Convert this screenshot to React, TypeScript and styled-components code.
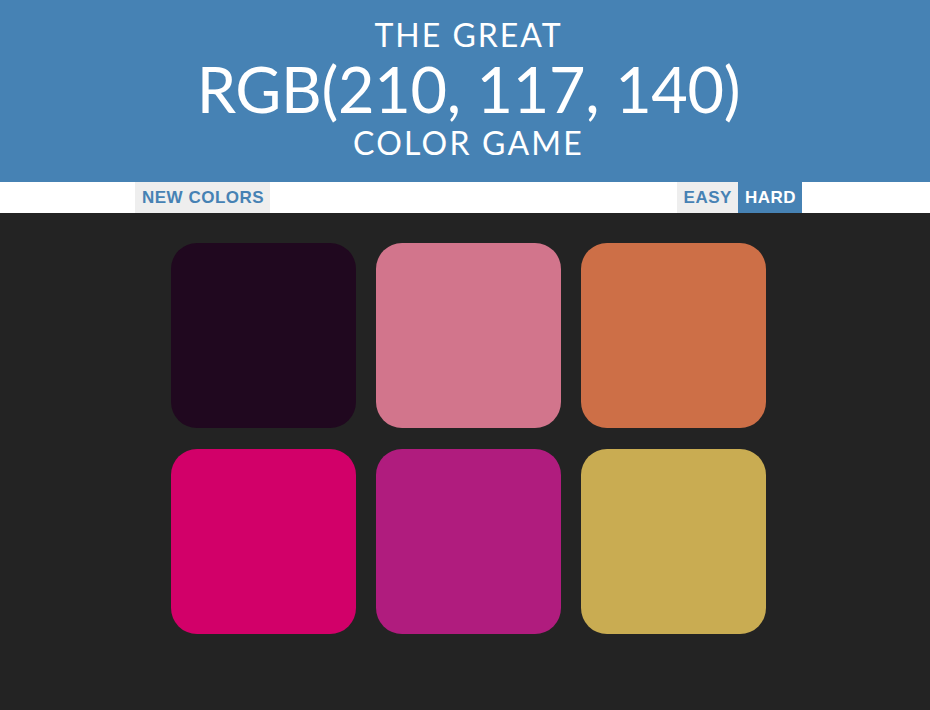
import React from "react";
import styled, { createGlobalStyle } from "styled-components";

const GlobalStyle = createGlobalStyle`
  html, body {
    margin: 0;
    padding: 0;
    background: #232323;
  }
  body {
    font-family: "Lato", "Liberation Sans", sans-serif;
  }
`;

const Header = styled.header`
  background: #4682b4;
  color: #ffffff;
  padding: 17px 0 0 7px;
  height: 182px;
  box-sizing: border-box;
  display: flex;
  flex-direction: column;
  align-items: center;
  text-transform: uppercase;
  font-family: "Lato", sans-serif;
  font-weight: 400;
`;

const Line = styled.div<{ $size: number; $lh: number; $spacing?: number }>`
  font-size: ${(p) => p.$size}px;
  line-height: ${(p) => p.$lh}px;
  letter-spacing: ${(p) => p.$spacing ?? 0}px;
  white-space: nowrap;
`;

const Stripe = styled.div`
  background: #ffffff;
  height: 31px;
  padding-left: 7px;
  display: flex;
  justify-content: center;
`;

const StripeInner = styled.div`
  width: 667px;
  display: flex;
  justify-content: space-between;
  align-items: stretch;
`;

const Group = styled.div`
  display: flex;
`;

const Button = styled.button<{ $active?: boolean }>`
  border: none;
  margin: 0;
  padding: 0 6px 0 7px;
  height: 31px;
  background: ${(p) => (p.$active ? "#4682b4" : "#eeeeee")};
  color: ${(p) => (p.$active ? "#ffffff" : "#4682b4")};
  font-family: "Liberation Sans", Arial, sans-serif;
  font-weight: 700;
  font-size: 17px;
  letter-spacing: 0.5px;
  text-transform: uppercase;
  cursor: pointer;
  outline: none;
`;

const Board = styled.main`
  padding: 30px 0 0 7px;
  display: grid;
  grid-template-columns: repeat(3, 185px);
  grid-auto-rows: 185px;
  column-gap: 20px;
  row-gap: 21px;
  justify-content: center;
`;

const Square = styled.div<{ $color: string }>`
  background: ${(p) => p.$color};
  border-radius: 26px;
`;

const colors = [
  "rgb(32, 8, 31)",
  "rgb(210, 117, 140)",
  "rgb(205, 111, 71)",
  "rgb(210, 0, 105)",
  "rgb(176, 28, 126)",
  "rgb(201, 172, 82)",
];

export default function App() {
  return (
    <>
      <GlobalStyle />
      <Header>
        <Line $size={32} $lh={36} $spacing={2}>The Great</Line>
        <Line $size={63} $lh={72} $spacing={-0.3}>RGB(210, 117, 140)</Line>
        <Line $size={32} $lh={36} $spacing={2.2}>Color Game</Line>
      </Header>
      <Stripe>
        <StripeInner>
          <Button>New Colors</Button>
          <Group>
            <Button>Easy</Button>
            <Button $active>Hard</Button>
          </Group>
        </StripeInner>
      </Stripe>
      <Board>
        {colors.map((c, i) => (
          <Square key={i} $color={c} />
        ))}
      </Board>
    </>
  );
}
